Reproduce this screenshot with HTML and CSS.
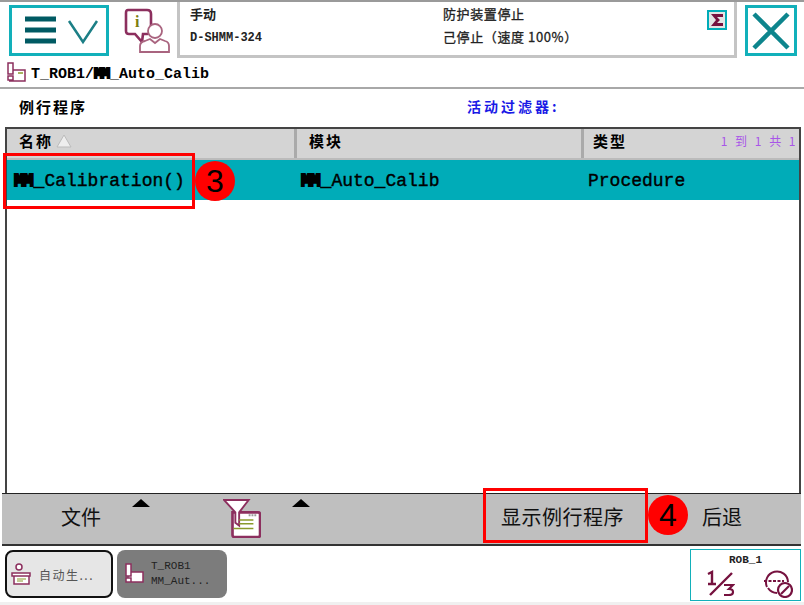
FILE: index.html
```html
<!DOCTYPE html>
<html lang="zh">
<head>
  <meta charset="UTF-8" />
  <title>例行程序</title>
  <link rel="stylesheet" href="styles.css">
</head>
<body>
<div class="screen">

  <header class="top-bar">
    <button class="menu-btn">
      <svg width="94" height="45" viewBox="0 0 94 45">
        <path d="M13 11h31M13 22h31M13 33h31" stroke="#005a63" stroke-width="5" fill="none"/>
        <path d="M57 13l14 21 14-21" stroke="#1c7f86" stroke-width="2.5" fill="none"/>
      </svg>
    </button>
    <svg class="info-icon" width="46" height="46" viewBox="0 0 46 46">
      <path d="M4 2h19q4 0 4 4v17q0 3-4 3h-4l-1 8-7-8H5q-3 0-3-3V5q0-3 2-3z" fill="#fff" stroke="#8c2f5e" stroke-width="2.6"/>
      <text x="11" y="19" class="info-i">i</text>
      <circle cx="31" cy="23" r="7" fill="#fff" stroke="#a9647f" stroke-width="1.8"/>
      <path d="M16 44v-6q0-4 5-5l5-2 5 4 5-4 5 2q4 1 4 5v6z" fill="#fff" stroke="#a9647f" stroke-width="1.8"/>
    </svg>
    <div class="status-panel">
      <div class="status-col status-left">
        <span>手动</span>
        <span class="status-mono">D-SHMM-324</span>
      </div>
      <div class="status-col status-right">
        <span>防护装置停止</span>
        <span>己停止（速度 100%）</span>
      </div>
      <svg class="status-flag" width="20" height="20" viewBox="0 0 20 20">
        <rect x="1" y="1" width="18" height="18" fill="#e4e4e4" stroke="#00acb8" stroke-width="2"/>
        <path d="M4 4h12v3h-6l3 3-3 3h6v3H4l5-6z" fill="#76123f"/>
      </svg>
    </div>
    <button class="close-btn">
      <svg width="44" height="44" viewBox="0 0 44 44">
        <path d="M5 5l34 34M39 5L5 39" stroke="#0d858d" stroke-width="4.5" fill="none"/>
      </svg>
    </button>
  </header>

  <div class="path-row">
    <svg width="19" height="21" viewBox="0 0 19 21">
      <path d="M1 1h5v11H1zM1 14h5v4H1zM6 8h12v11H2" fill="#fff" stroke="#8c2f5e" stroke-width="1.5"/>
      <path d="M11 11h5" stroke="#8a9a2c" stroke-width="1.5"/>
    </svg>
    <span class="path-text">T_ROB1/<span class="masked">MM</span>_Auto_Calib</span>
  </div>

  <div class="title-row">
    <span class="title">例行程序</span>
    <span class="filter-label">活动过滤器:</span>
  </div>

  <div class="table">
    <div class="table-head">
      <div class="col col-name head-cell">名称
        <svg class="sort-icon" width="18" height="16" viewBox="0 0 18 16">
          <path d="M9 2l7 12H2z" fill="#eee" stroke="#bbb"/>
        </svg>
      </div>
      <div class="col col-module head-cell">模块</div>
      <div class="col col-type head-cell">类型<span class="count">1 到 1 共 1</span></div>
    </div>
    <div class="table-row">
      <div class="col col-name"><span class="masked">MM</span>_Calibration()</div>
      <div class="col col-module"><span class="masked">MM</span>_Auto_Calib</div>
      <div class="col col-type">Procedure</div>
    </div>
  </div>

  <div class="toolbar">
    <div class="tool tool-file">文件<i class="up-arrow"></i></div>
    <div class="tool tool-filter">
      <svg width="38" height="39" viewBox="0 0 40 41">
        <path d="M10 14h27q2 0 2 2v22q0 2-2 2H12q-2 0-2-2z" fill="#fff" stroke="#8c2f5e" stroke-width="2.8"/>
        <path d="M1 1h26L17 14v14l-4-3V14z" fill="#fff" stroke="#8c2f5e" stroke-width="2"/>
        <path d="M17 22h15M17 26h15M11 31h21" stroke="#8a9a2c" stroke-width="1.5"/>
        <path d="M27 17h8" stroke="#999" stroke-width="2" stroke-dasharray="2 1"/>
      </svg>
      <i class="up-arrow"></i>
    </div>
    <div class="tool tool-show">显示例行程序</div>
    <div class="tool tool-back">后退</div>
  </div>

  <div class="task-bar">
    <div class="task task-active">
      <svg width="20" height="22" viewBox="0 0 20 22">
        <circle cx="8" cy="4" r="3" fill="#fff" stroke="#8c2f5e" stroke-width="1.5"/>
        <path d="M1 10h18v3H1zM3 13h15v8H3z" fill="#fff" stroke="#8c2f5e" stroke-width="1.5"/>
        <path d="M6 16h9M6 18h6" stroke="#8a9a2c" stroke-width="1.2"/>
      </svg>
      <span>自动生...</span>
    </div>
    <div class="task task-dim">
      <svg width="19" height="22" viewBox="0 0 19 22">
        <path d="M1 1h5v12H1zM1 15h5v4H1zM6 9h12v10H2" fill="#fff" stroke="#8c2f5e" stroke-width="1.5"/>
      </svg>
      <span class="task-mono">T_ROB1<br>MM_Aut...</span>
    </div>
    <div class="rob-box">
      <div class="rob-name">ROB_1</div>
      <div class="rob-icons">
        <svg width="28" height="26" viewBox="0 0 28 26">
          <path d="M1 4l4-2v12M1 14h8M3 25L25 3" stroke="#76123f" stroke-width="2.4" fill="none"/>
          <path d="M17 15h9l-4 4q4 0 4 3t-4 3h-5" stroke="#76123f" stroke-width="2.2" fill="none"/>
        </svg>
        <svg width="30" height="28" viewBox="0 0 30 28">
          <path d="M4 17a11 11 0 1 1 21-5" stroke="#76123f" stroke-width="2" fill="none"/>
          <path d="M1 11h20" stroke="#76123f" stroke-width="2" stroke-dasharray="3 1.5"/>
          <path d="M5 18a11 11 0 0 0 9 5" stroke="#76123f" stroke-width="2" fill="none"/>
          <circle cx="22" cy="20" r="7" fill="#fff" stroke="#76123f" stroke-width="2.2"/>
          <path d="M18 24l8-8" stroke="#76123f" stroke-width="2.2"/>
        </svg>
      </div>
    </div>
  </div>

  <!-- notes drawn over the screenshot -->
  <div class="mark-box mark-routine"></div>
  <div class="mark-num mark-3">3</div>
  <div class="mark-box mark-show"></div>
  <div class="mark-num mark-4">4</div>
</div>
</body>
</html>
```

FILE: styles.css
```css
* {
  box-sizing: border-box;
}

html, body {
  margin: 0;
  background: #fff;
}

.screen {
  position: relative;
  width: 804px;
  height: 605px;
  overflow: hidden;
  display: flex;
  flex-direction: column;
  background: #fff;
  color: #000;
  font-family: "Noto Sans CJK SC", "Liberation Sans", sans-serif;
  border-top: 2px solid #9a9a9a;
  border-bottom: 3px solid #f0f0f0;
}

.masked {
  font-weight: bold;
  -webkit-text-stroke: 2px #000;
  letter-spacing: -2px;
  margin-right: 2px;
}

/* top */
.top-bar {
  height: 56px;
  flex: none;
  display: flex;
  align-items: flex-start;
}

.menu-btn,
.close-btn {
  padding: 0;
  background: #fff;
  border: 3px solid #12b0ba;
  display: flex;
  align-items: center;
  justify-content: center;
  flex: none;
}

.menu-btn {
  width: 100px;
  height: 51px;
  margin: 3px 0 0 9px;
}

.close-btn {
  width: 52px;
  height: 51px;
  margin: 3px 7px 0 8px;
}

.info-icon {
  flex: none;
  margin: 6px 7px 0 15px;
}

.status-panel {
  flex: 1;
  height: 56px;
  display: flex;
  background: #fff;
  border: 3px solid #c4c4c4;
  border-top: 0;
  padding: 4px 0 0 10px;
  font-size: 13px;
  color: #222;
  position: relative;
}

.status-col {
  display: flex;
  flex-direction: column;
  gap: 7px;
  line-height: 16px;
}

.status-left {
  width: 253px;
  font-weight: bold;
}

.status-mono {
  font-family: "Liberation Mono", monospace;
  font-size: 12px;
  margin-top: 1px;
}

.status-right {
  letter-spacing: 0.6px;
  -webkit-text-stroke: 0.3px #222;
}

.status-flag {
  position: absolute;
  top: 8px;
  right: 7px;
}

.info-i {
  font: bold 16px "Liberation Serif", serif;
  fill: #7d7d10;
}

/* path + title */
.path-row {
  height: 31px;
  flex: none;
  display: flex;
  align-items: center;
  gap: 5px;
  padding: 4px 0 0 7px;
  border-bottom: 2px solid #a8a8a8;
}

.path-row svg {
  margin-top: -4px;
}

.path-text {
  font: bold 15px "Liberation Mono", monospace;
}

.title-row {
  height: 38px;
  flex: none;
  display: flex;
  align-items: center;
  padding: 0 0 4px 19px;
  font-weight: bold;
}

.title {
  width: 448px;
  font-size: 15px;
  letter-spacing: 2px;
}

.filter-label {
  color: #1a1ae6;
  font-size: 14px;
  letter-spacing: 3px;
}

/* table */
.table {
  flex: 1;
  margin: 0 3px 0 5px;
  border: 2px solid #444;
  border-bottom: 0;
  font: 18px "Liberation Mono", monospace;
  -webkit-text-stroke: 0.4px #000;
}

.table-head,
.table-row {
  display: flex;
}

.table-head {
  height: 31px;
  background: #d4d4d4;
  border-bottom: 2px solid #bbb;
  font-family: "Noto Sans CJK SC", sans-serif;
}

.table-row {
  height: 40px;
  background: #00acb8;
  align-items: center;
  padding-top: 2px;
}

.col {
  padding-left: 7px;
  flex: none;
}

.col-name {
  width: 290px;
}

.col-module {
  width: 287px;
  padding-left: 4px;
}

.col-type {
  flex: 1;
  display: flex;
  justify-content: space-between;
  padding-left: 4px;
}

.head-cell {
  height: 29px;
  padding: 0 0 6px 12px;
  display: flex;
  align-items: center;
  font-size: 15px;
  font-weight: bold;
  letter-spacing: 2px;
  border-right: 3px solid #aaa;
  -webkit-text-stroke: 0;
}

.head-cell.col-type {
  border-right: 0;
  padding-left: 9px;
}

.sort-icon {
  margin-left: 2px;
}

.count {
  margin-left: auto;
  padding-right: 2px;
  color: #a855e8;
  font-size: 12px;
  font-weight: normal;
  letter-spacing: 1.5px;
  word-spacing: 2px;
}

/* toolbar */
.toolbar {
  height: 53px;
  flex: none;
  display: flex;
  align-items: center;
  background: #bfbfbf;
  border-top: 1px solid #222;
  border-bottom: 2px solid #333;
  margin: 0 3px 0 2px;
  font-size: 20px;
  color: #111;
}

.tool {
  position: relative;
  height: 100%;
  display: flex;
  align-items: center;
  padding-bottom: 5px;
}

.tool-file {
  width: 182px;
  padding-left: 59px;
}

.tool-filter {
  width: 300px;
  padding-left: 39px;
  padding-bottom: 1px;
}

.tool-show {
  width: 198px;
  padding-left: 17px;
  letter-spacing: 0.5px;
}

.tool-back {
  padding-left: 20px;
}

.up-arrow {
  position: absolute;
  top: 5px;
  width: 0;
  height: 0;
  border-left: 9px solid transparent;
  border-right: 9px solid transparent;
  border-bottom: 8px solid #000;
}

.tool-file .up-arrow {
  left: 130px;
}

.tool-filter .up-arrow {
  left: 108px;
}

/* task bar */
.task-bar {
  height: 56px;
  flex: none;
  display: flex;
  align-items: flex-start;
  gap: 4px;
  padding: 4px 3px 0 5px;
}

.task {
  width: 108px;
  height: 48px;
  display: flex;
  align-items: center;
  gap: 8px;
  padding-left: 4px;
  border-radius: 8px;
  font-size: 12px;
  color: #555;
}

.task-active {
  background: #e6e6e6;
  border: 2px solid #111;
  letter-spacing: 1.5px;
}

.task-dim {
  width: 110px;
  background: #7c7c7c;
  color: #222;
  gap: 7px;
  padding-left: 8px;
}

.task-mono {
  font: 11px/15px "Liberation Mono", monospace;
}

.rob-box {
  margin: -1px 0 0 auto;
  width: 111px;
  height: 52px;
  border: 1px solid #12b0ba;
}

.rob-name {
  text-align: center;
  font: bold 11px/13px "Liberation Mono", monospace;
  color: #222;
  margin-top: 4px;
}

.rob-icons {
  display: flex;
  justify-content: space-between;
  padding: 3px 7px 0 16px;
}

/* red notes */
.mark-box {
  position: absolute;
  border: 3px solid #f00;
}

.mark-routine {
  left: 3px;
  top: 151px;
  width: 192px;
  height: 56px;
}

.mark-show {
  left: 483px;
  top: 486px;
  width: 165px;
  height: 55px;
}

.mark-num {
  position: absolute;
  width: 40px;
  height: 40px;
  border-radius: 50%;
  background: #f00;
  font: 32px/40px "Liberation Sans", sans-serif;
  text-align: center;
}

.mark-3 {
  left: 195px;
  top: 159px;
}

.mark-4 {
  left: 648px;
  top: 493px;
}
```
